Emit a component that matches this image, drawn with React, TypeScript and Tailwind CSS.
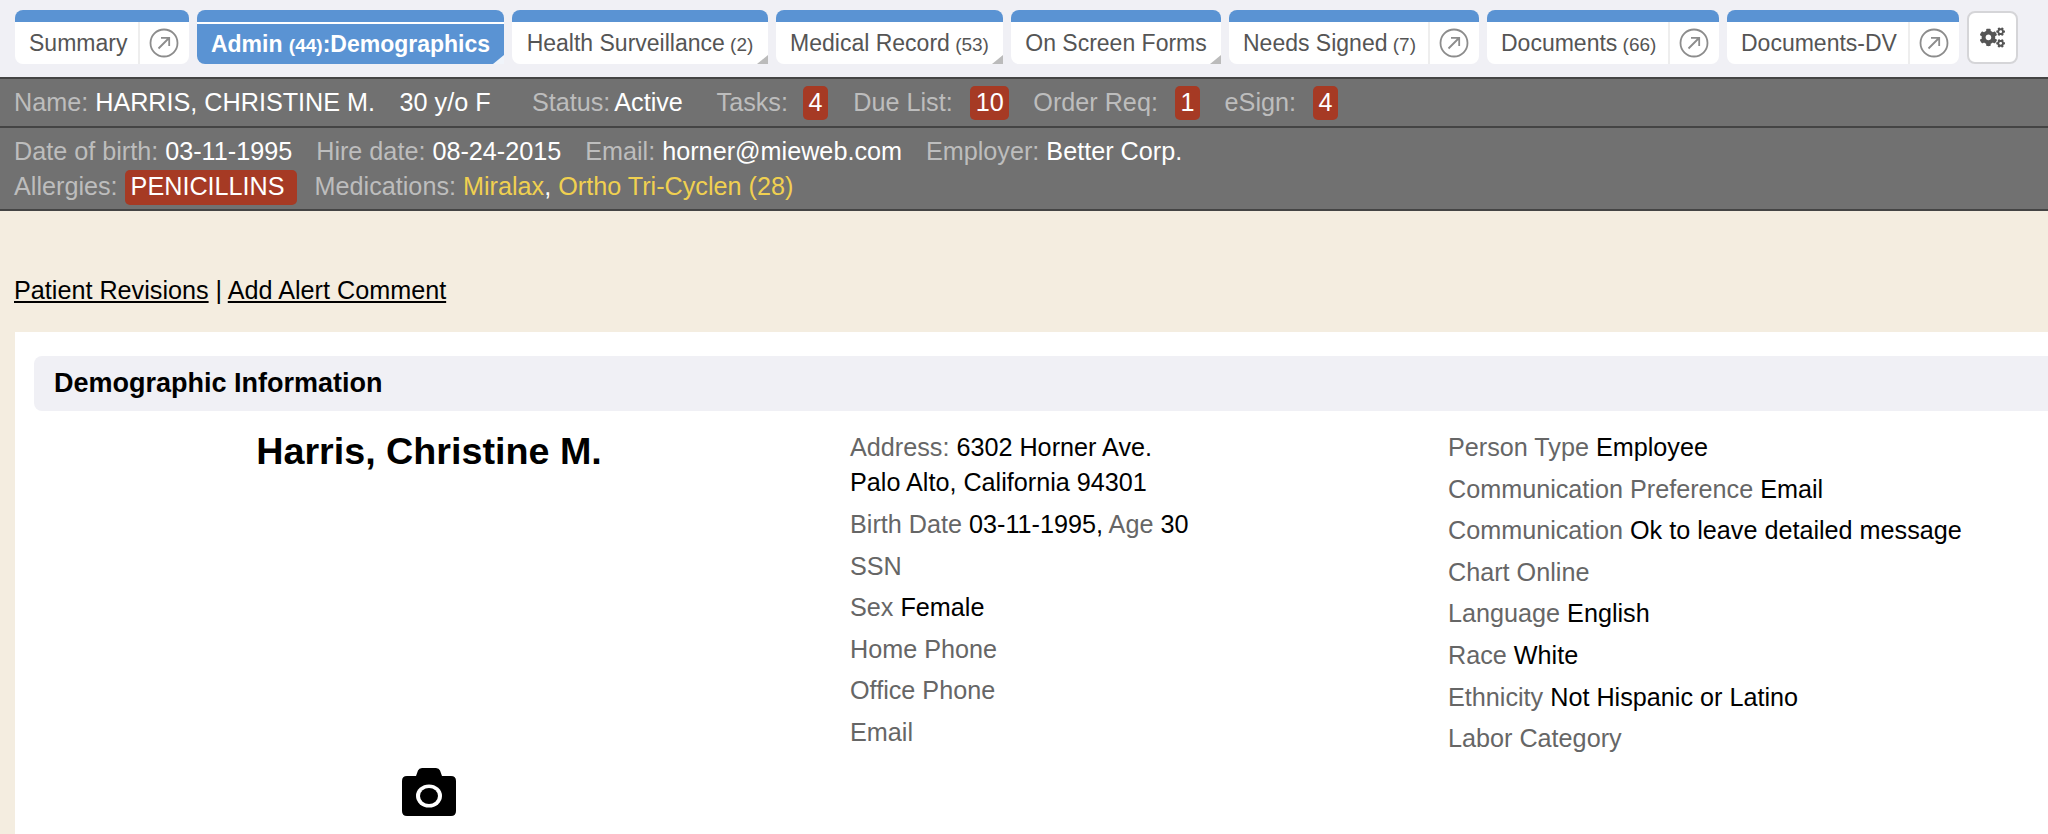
import React from 'react';
import { FaCogs } from 'react-icons/fa';

const font = { fontFamily: '"Liberation Sans", Arial, sans-serif' };

const ArrowCircle = () => (
    <svg width="30" height="30" viewBox="0 0 30 30" fill="none" stroke="#8c8c8c" strokeWidth="1.8">
        <circle cx="15" cy="15" r="13.5" />
        <path d="M9.5 20.5 L20 10 M12 9.8 H20.2 V18" />
    </svg>
);

const Camera = () => (
    <svg width="54" height="48" viewBox="0 0 54 48">
        <path
            fill="#000"
            d="M5 8 H14 L16 2.5 Q17 0 20 0 H34 Q37 0 38 2.5 L40 8 H49 Q54 8 54 13 V43 Q54 48 49 48 H5 Q0 48 0 43 V13 Q0 8 5 8 Z"
        />
        <ellipse cx="27" cy="28" rx="13" ry="11.5" fill="#fff" />
        <ellipse cx="27" cy="28" rx="9" ry="8" fill="#000" />
    </svg>
);

const Corner = ({ color }: { color: string }) => (
    <div
        className={`absolute right-0 bottom-0 w-0 h-0 border-l-[11px] border-l-transparent border-b-[9px] ${color}`}
    />
);

interface TabProps {
    label: string;
    count?: string;
    width: string;
    arrow?: boolean;
}

const Tab = ({ label, count, width, arrow }: TabProps) => (
    <div className={`${width} h-[54px] flex flex-col shrink-0`}>
        <div className="h-[12px] bg-[#5a93d3] rounded-t-lg" />
        {arrow ? (
            <div className="flex-1 bg-white rounded-b-lg flex items-center text-[#555] text-[23px]">
                <div className="flex-1 pl-[14px] whitespace-nowrap">
                    {label}
                    {count && <span className="text-[19px]"> {count}</span>}
                </div>
                <div className="w-[51px] h-full border-l-2 border-[#eee] flex items-center pl-[9px]">
                    <ArrowCircle />
                </div>
            </div>
        ) : (
            <div className="relative flex-1 bg-white rounded-bl-lg flex items-center justify-center text-[#555] text-[23px] whitespace-nowrap">
                <span>
                    {label}
                    {count && <span className="text-[19px]"> {count}</span>}
                </span>
                <Corner color="border-b-[#bbb]" />
            </div>
        )}
    </div>
);

const Badge = ({ n, ml }: { n: string; ml: string }) => (
    <span className={`${ml} h-[34px] px-[5.5px] rounded-[5px] bg-[#a63a24] text-white flex items-center`}>{n}</span>
);

const Row = ({ label, value, className }: { label?: string; value?: string; className?: string }) => (
    <div className={`h-[41.6px] leading-[42px] whitespace-nowrap ${className ?? ''}`}>
        {label && <span className="text-[#666]">{label}</span>}
        {value && <span className="text-black"> {value}</span>}
    </div>
);

export default function App() {
    return (
        <div className="w-[2048px] h-[834px] overflow-hidden bg-[#f4ede0] text-[25.2px]" style={font}>
            {/* Tabs */}
            <div className="h-[77px] bg-[#f0f0f5] pl-[15px] pt-[10px] flex gap-2">
                <Tab label="Summary" width="w-[174px]" arrow />
                <div className="w-[307px] h-[54px] flex flex-col shrink-0">
                    <div className="h-[12px] bg-[#5a93d3] rounded-t-lg" />
                    <div className="h-[2px] bg-white" />
                    <div className="relative flex-1 bg-[#5a93d3] rounded-bl-lg flex items-center justify-center text-white font-bold text-[23px] whitespace-nowrap">
                        <span>
                            Admin <span className="text-[19px]">(44)</span>:Demographics
                        </span>
                        <Corner color="border-b-[#f0f4fa]" />
                    </div>
                </div>
                <Tab label="Health Surveillance" count="(2)" width="w-[256px]" />
                <Tab label="Medical Record" count="(53)" width="w-[227px]" />
                <Tab label="On Screen Forms" width="w-[210px]" />
                <Tab label="Needs Signed" count="(7)" width="w-[250px]" arrow />
                <Tab label="Documents" count="(66)" width="w-[232px]" arrow />
                <Tab label="Documents-DV" width="w-[232px]" arrow />
                <div className="mt-[1px] w-[51px] h-[53px] bg-white border-2 border-[#d5d5d8] rounded-lg flex items-center justify-center text-[#555] text-[25px]">
                    <FaCogs />
                </div>
            </div>

            {/* Patient banner */}
            <div className="bg-[#717171] border-t-2 border-[#444] text-[#bdbdbd]">
                <div className="h-[49px] flex items-center pl-[14px] border-b-2 border-[#444] whitespace-nowrap">
                    <span>Name:</span>
                    <span className="ml-[7px] text-white">HARRIS, CHRISTINE M.</span>
                    <span className="ml-[24.5px] text-white">30 y/o F</span>
                    <span className="ml-[41.3px]">Status:</span>
                    <span className="ml-[4px] text-white">Active</span>
                    <span className="ml-[33.7px]">Tasks:</span>
                    <Badge n="4" ml="ml-[15px]" />
                    <span className="ml-[25.3px]">Due List:</span>
                    <Badge n="10" ml="ml-[17.6px]" />
                    <span className="ml-[24px]">Order Req:</span>
                    <Badge n="1" ml="ml-[17.2px]" />
                    <span className="ml-[24.5px]">eSign:</span>
                    <Badge n="4" ml="ml-[17px]" />
                </div>
                <div className="h-[83px] pl-[14px] pt-[7px] border-b-2 border-[#444] whitespace-nowrap">
                    <div className="h-[34px] flex items-center">
                        <span>Date of birth:</span>
                        <span className="ml-[7px] text-white">03-11-1995</span>
                        <span className="ml-[24px]">Hire date:</span>
                        <span className="ml-[7px] text-white">08-24-2015</span>
                        <span className="ml-[24px]">Email:</span>
                        <span className="ml-[7px] text-white">horner@mieweb.com</span>
                        <span className="ml-[24px]">Employer:</span>
                        <span className="ml-[7px] text-white">Better Corp.</span>
                    </div>
                    <div className="h-[36px] flex items-center">
                        <span>Allergies:</span>
                        <span className="ml-[7px] h-[35px] pl-[6px] pr-[12px] rounded-[5px] bg-[#a63a24] text-white flex items-center">PENICILLINS</span>
                        <span className="ml-[18px]">Medications:</span>
                        <span className="ml-[7px] text-[#f0d050]">Miralax</span>
                        <span className="text-white">,</span>
                        <span className="ml-[7px] text-[#f0d050]">Ortho Tri-Cyclen (28)</span>
                    </div>
                </div>
            </div>

            {/* Links */}
            <div className="h-[121px] pl-[14px] pt-[63px] text-black leading-[32px] whitespace-nowrap">
                <span className="underline">Patient Revisions</span> | <span className="underline">Add Alert Comment</span>
            </div>

            {/* Main panel */}
            <div className="ml-[15px] h-[502px] bg-white pt-[24px] pl-[19px]">
                <div className="h-[55px] bg-[#f0f0f5] rounded-l-lg pl-[20px] flex items-center text-black font-bold text-[27px]">
                    Demographic Information
                </div>
                <div className="flex">
                    <div className="w-[788px] shrink-0 flex flex-col items-center">
                        <div className="mt-[16px] ml-[2px] h-[48px] leading-[48px] text-[37.7px] font-bold text-black">Harris, Christine M.</div>
                        <div className="mt-[293px] ml-[2px] text-black">
                            <Camera />
                        </div>
                    </div>
                    <div className="ml-[28px] w-[598px] shrink-0 pt-[15px]">
                        <div className="h-[35px] leading-[42px]">
                            <span className="text-[#666]">Address:</span>
                            <span className="text-black"> 6302 Horner Ave.</span>
                        </div>
                        <div className="h-[42px] leading-[42px] text-black">Palo Alto, California 94301</div>
                        <div className="h-[41.6px] leading-[42px] whitespace-nowrap">
                            <span className="text-[#666]">Birth Date</span>
                            <span className="text-black"> 03-11-1995,</span>
                            <span className="text-[#666]"> Age</span>
                            <span className="text-black"> 30</span>
                        </div>
                        <Row label="SSN" />
                        <Row label="Sex" value="Female" />
                        <Row label="Home Phone" />
                        <Row label="Office Phone" />
                        <Row label="Email" />
                    </div>
                    <div className="pt-[15px]">
                        <Row label="Person Type" value="Employee" />
                        <Row label="Communication Preference" value="Email" />
                        <Row label="Communication" value="Ok to leave detailed message" />
                        <Row label="Chart Online" />
                        <Row label="Language" value="English" />
                        <Row label="Race" value="White" />
                        <Row label="Ethnicity" value="Not Hispanic or Latino" />
                        <Row label="Labor Category" />
                    </div>
                </div>
            </div>
        </div>
    );
}
